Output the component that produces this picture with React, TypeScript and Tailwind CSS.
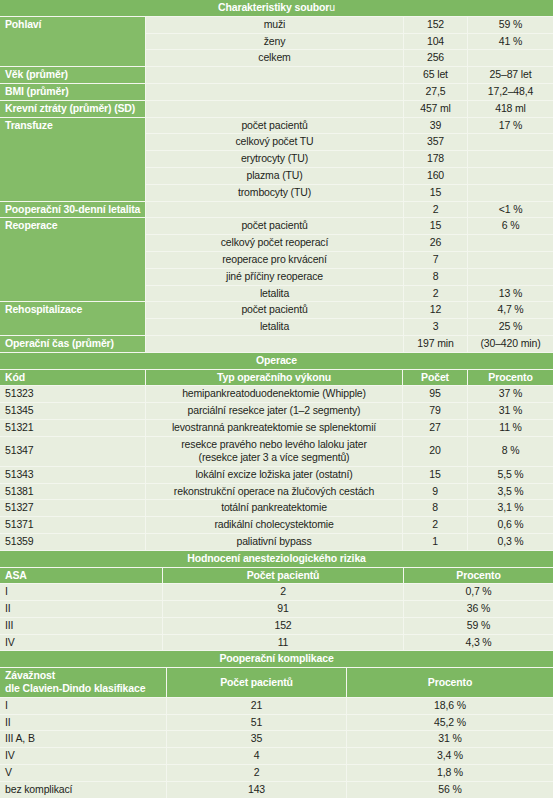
import React from "react";

type Row = { label?: string; span?: number; sub: string; a: string; b: string };

const font = { fontFamily: '"Liberation Sans", Arial, sans-serif' };

const rows1: Row[] = [
  { label: "Pohlaví", span: 3, sub: "muži", a: "152", b: "59 %" },
  { sub: "ženy", a: "104", b: "41 %" },
  { sub: "celkem", a: "256", b: "" },
  { label: "Věk (průměr)", span: 1, sub: "", a: "65 let", b: "25–87 let" },
  { label: "BMI (průměr)", span: 1, sub: "", a: "27,5", b: "17,2–48,4" },
  { label: "Krevní ztráty (průměr) (SD)", span: 1, sub: "", a: "457 ml", b: "418 ml" },
  { label: "Transfuze", span: 5, sub: "počet pacientů", a: "39", b: "17 %" },
  { sub: "celkový počet TU", a: "357", b: "" },
  { sub: "erytrocyty (TU)", a: "178", b: "" },
  { sub: "plazma (TU)", a: "160", b: "" },
  { sub: "trombocyty (TU)", a: "15", b: "" },
  { label: "Pooperační 30-denní letalita", span: 1, sub: "", a: "2", b: "<1 %" },
  { label: "Reoperace", span: 5, sub: "počet pacientů", a: "15", b: "6 %" },
  { sub: "celkový počet reoperací", a: "26", b: "" },
  { sub: "reoperace pro krvácení", a: "7", b: "" },
  { sub: "jiné příčiny reoperace", a: "8", b: "" },
  { sub: "letalita", a: "2", b: "13 %" },
  { label: "Rehospitalizace", span: 2, sub: "počet pacientů", a: "12", b: "4,7 %" },
  { sub: "letalita", a: "3", b: "25 %" },
  { label: "Operační čas (průměr)", span: 1, sub: "", a: "197 min", b: "(30–420 min)" },
];

const ops: [string, string[], string, string][] = [
  ["51323", ["hemipankreatoduodenektomie (Whipple)"], "95", "37 %"],
  ["51345", ["parciální resekce jater (1–2 segmenty)"], "79", "31 %"],
  ["51321", ["levostranná pankreatektomie se splenektomií"], "27", "11 %"],
  ["51347", ["resekce pravého nebo levého laloku jater", "(resekce jater 3 a více segmentů)"], "20", "8 %"],
  ["51343", ["lokální excize ložiska jater (ostatní)"], "15", "5,5 %"],
  ["51381", ["rekonstrukční operace na žlučových cestách"], "9", "3,5 %"],
  ["51327", ["totální pankreatektomie"], "8", "3,1 %"],
  ["51371", ["radikální cholecystektomie"], "2", "0,6 %"],
  ["51359", ["paliativní bypass"], "1", "0,3 %"],
];

const asa = [
  ["I", "2", "0,7 %"],
  ["II", "91", "36 %"],
  ["III", "152", "59 %"],
  ["IV", "11", "4,3 %"],
];

const clavien = [
  ["I", "21", "18,6 %"],
  ["II", "51", "45,2 %"],
  ["III A, B", "35", "31 %"],
  ["IV", "4", "3,4 %"],
  ["V", "2", "1,8 %"],
  ["bez komplikací", "143", "56 %"],
];

const cell = "bg-[#e8eedf] text-[#231f20] text-center leading-[15.8px]";
const head = "bg-[#7db862] text-white font-bold leading-[15.8px]";

function Title({ children }: { children: React.ReactNode }) {
  return <div className={`${head} h-[15.8px] text-center`}>{children}</div>;
}

export default function App() {
  return (
    <div className="w-[553px] bg-white text-[10.5px] tracking-[-0.15px]" style={font}>
      <div className="flex flex-col gap-px bg-[#f3f6ee]">
        <Title>
          Charakteristiky soubor<span className="font-normal">u</span>
        </Title>
        <div className="grid grid-cols-[145px_257px_63px_1fr] auto-rows-[15.8px] gap-px">
          {rows1.map((r, i) => (
            <React.Fragment key={i}>
              {r.label !== undefined ? (
                <div
                  className={`${head} bg-[#84bc68] pl-[5px] ${
                    r.span === 5 ? "row-span-5" : r.span === 3 ? "row-span-3" : r.span === 2 ? "row-span-2" : ""
                  }`}
                >
                  {r.label}
                </div>
              ) : null}
              <div className={cell}>{r.sub}</div>
              <div className={cell}>{r.a}</div>
              <div className={cell}>{r.b}</div>
            </React.Fragment>
          ))}
        </div>

        <Title>Operace</Title>
        <div className="grid grid-cols-[145px_256px_64px_1fr] gap-px">
          <div className={`${head} h-[15.8px] pl-[5px]`}>Kód</div>
          <div className={`${head} text-center`}>Typ operačního výkonu</div>
          <div className={`${head} text-center`}>Počet</div>
          <div className={`${head} text-center`}>Procento</div>
          {ops.map(([code, name, n, p]) => (
            <React.Fragment key={code}>
              <div
                className={`${cell} flex items-center pl-[5px] text-left ${
                  name.length > 1 ? "h-[29px]" : "h-[15.8px]"
                }`}
              >
                {code}
              </div>
              <div className={`${cell} flex flex-col justify-center`}>
                {name.map((l) => (
                  <span key={l} className="leading-[13.5px]">
                    {l}
                  </span>
                ))}
              </div>
              <div className={`${cell} flex items-center justify-center`}>{n}</div>
              <div className={`${cell} flex items-center justify-center`}>{p}</div>
            </React.Fragment>
          ))}
        </div>

        <Title>Hodnocení anesteziologického rizika</Title>
        <div className="grid grid-cols-[162px_240px_1fr] auto-rows-[15.8px] gap-px">
          <div className={`${head} pl-[5px]`}>ASA</div>
          <div className={`${head} text-center`}>Počet pacientů</div>
          <div className={`${head} text-center`}>Procento</div>
          {asa.map(([a, n, p]) => (
            <React.Fragment key={a}>
              <div className={`${cell} pl-[5px] text-left`}>{a}</div>
              <div className={cell}>{n}</div>
              <div className={cell}>{p}</div>
            </React.Fragment>
          ))}
        </div>

        <Title>Pooperační komplikace</Title>
        <div className="grid grid-cols-[166px_179px_1fr] gap-px">
          <div className={`${head} h-[28.5px] pl-[5px] pt-[1px] !leading-[12.5px]`}>
            Závažnost
            <br />
            dle Clavien-Dindo klasifikace
          </div>
          <div className={`${head} flex items-center justify-center`}>Počet pacientů</div>
          <div className={`${head} flex items-center justify-center`}>Procento</div>
          {clavien.map(([a, n, p]) => (
            <React.Fragment key={a}>
              <div className={`${cell} h-[15.8px] pl-[5px] text-left`}>{a}</div>
              <div className={cell}>{n}</div>
              <div className={cell}>{p}</div>
            </React.Fragment>
          ))}
        </div>
      </div>
    </div>
  );
}
